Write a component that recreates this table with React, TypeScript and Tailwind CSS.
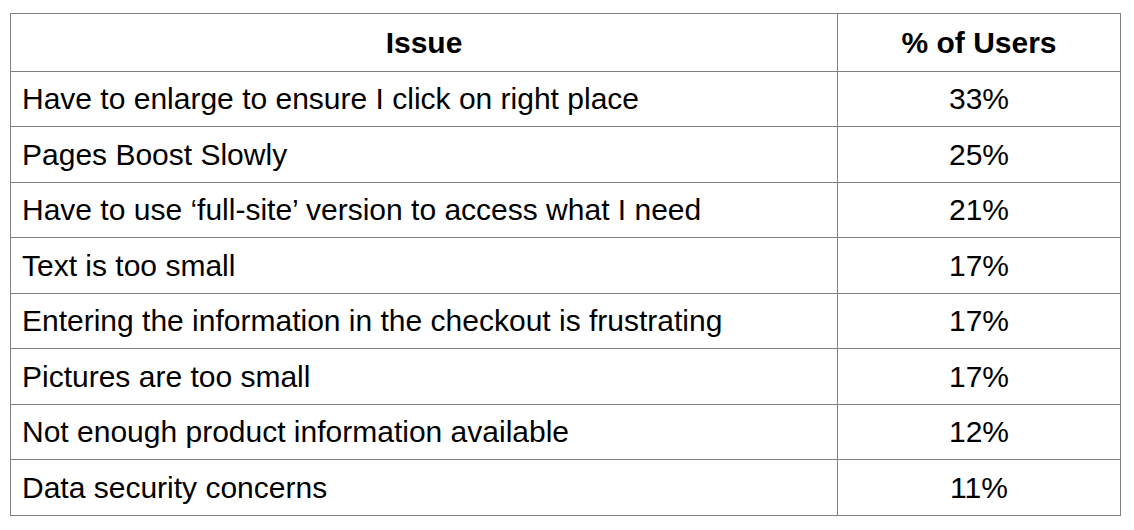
const rows = [
  { issue: 'Have to enlarge to ensure I click on right place', pct: '33%' },
  { issue: 'Pages Boost Slowly', pct: '25%' },
  { issue: 'Have to use \u2018full-site\u2019 version to access what I need', pct: '21%' },
  { issue: 'Text is too small', pct: '17%' },
  { issue: 'Entering the information in the checkout is frustrating', pct: '17%' },
  { issue: 'Pictures are too small', pct: '17%' },
  { issue: 'Not enough product information available', pct: '12%' },
  { issue: 'Data security concerns', pct: '11%' },
]

export default function App() {
  return (
    <div className="w-[1134px] h-[530px] bg-white pt-[13px] pl-[10px] font-['Helvetica','Liberation_Sans',Arial,sans-serif] text-black">
      <table className="border-collapse w-[1111px] text-[30px] leading-none">
        <thead>
          <tr className="h-[58px]">
            <th className="border border-[#808080] w-[827px] font-bold text-center">Issue</th>
            <th className="border border-[#808080] font-bold text-center">% of Users</th>
          </tr>
        </thead>
        <tbody>
          {rows.map((r, i) => (
            <tr key={i} className={i % 2 === 0 ? 'h-[55px]' : 'h-[56px]'}>
              <td className="border border-[#808080] pl-[11px] text-left">{r.issue}</td>
              <td className="border border-[#808080] text-center">{r.pct}</td>
            </tr>
          ))}
        </tbody>
      </table>
    </div>
  )
}
